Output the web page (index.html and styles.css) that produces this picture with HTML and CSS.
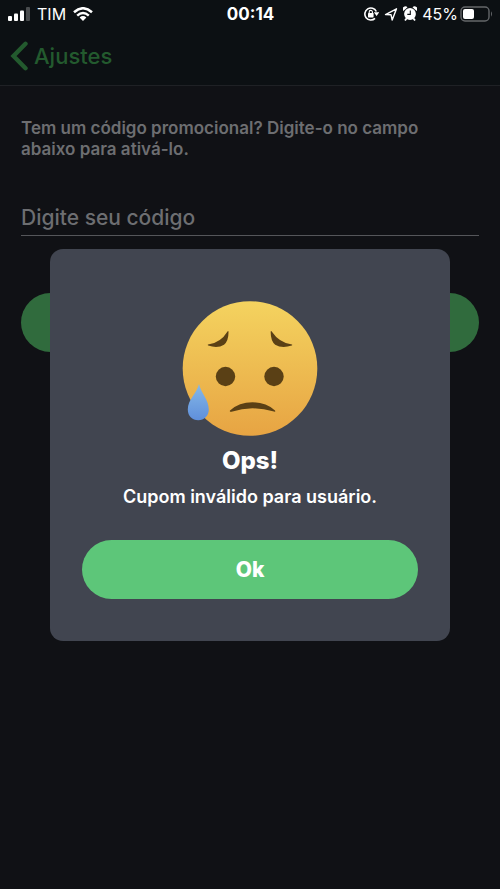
FILE: index.html
```html
<!DOCTYPE html>
<html lang="pt-BR">
<head>
<meta charset="utf-8">
<meta name="viewport" content="width=device-width, initial-scale=1">
<title>Código promocional</title>
<link rel="stylesheet" href="styles.css">
</head>
<body>
<header class="top">
  <div class="status">
    <div class="status-side">
      <svg width="22" height="14" viewBox="0 0 22 14" aria-hidden="true">
        <rect x="0" y="9" width="4" height="5" rx="1"/>
        <rect x="6" y="6.500" width="4" height="7.500" rx="1"/>
        <rect x="12" y="3.500" width="4" height="10.500" rx="1"/>
        <rect x="18" y="0" width="4" height="14" rx="1" opacity=".25"/>
      </svg>
      <span>TIM</span>
      <svg width="20" height="14" viewBox="0 0 20 14" aria-hidden="true">
        <g fill="none" stroke="currentColor" stroke-width="2.500">
          <path d="M1 5.200Q10-2.700 19 5.200"/>
          <path d="M4.200 8.600Q10 3.500 15.800 8.600"/>
        </g>
        <path d="M6.600 10.400Q10 7.700 13.400 10.400L10 14Z"/>
      </svg>
    </div>
    <time class="clock">00:14</time>
    <div class="status-side status-right">
      <svg width="15" height="16" viewBox="0 0 15 16" aria-hidden="true">
        <path d="M12.300 5.500A6 6 0 1 0 11 12.400" fill="none" stroke="currentColor" stroke-width="1.600"/>
        <path d="M9.800 6.300H15.200L12.600 10Z"/>
        <rect x="4" y="7" width="5.600" height="4.400" rx=".6"/>
        <path d="M5.200 7.300V6a1.600 1.600 0 0 1 3.200 0V7.300" fill="none" stroke="currentColor" stroke-width="1.100"/>
      </svg>
      <svg width="14" height="16" viewBox="0 0 14 16" aria-hidden="true">
        <path d="M1.500 8.600L12.500 2.800L8.200 14L7 8.700Z" fill="none" stroke="currentColor" stroke-width="1.400" stroke-linejoin="round"/>
      </svg>
      <svg width="14" height="16" viewBox="0 0 14 16" aria-hidden="true">
        <circle cx="7" cy="8" r="5.900"/>
        <path d="M.3 4.900A2.700 2.700 0 0 1 4.500 1.300ZM13.700 4.900A2.700 2.700 0 0 0 9.500 1.300Z"/>
        <path d="M3.500 12.500L2 14.500M10.500 12.500L12 14.500" stroke="currentColor" stroke-width="1.800"/>
        <path d="M7.300 4.500V8.400H4.300" fill="none" stroke="#0c1013" stroke-width="1.100"/>
      </svg>
      <span class="battery">45%
        <svg width="33" height="16" viewBox="0 0 33 16" aria-hidden="true">
          <rect x="1" y="1" width="28" height="14" rx="4" fill="none" stroke="#64676a" stroke-width="1.400"/>
          <rect x="3" y="3" width="11" height="10" rx="2"/>
          <path d="M31 5.300Q33 8 31 10.700Z" fill="#64676a"/>
        </svg>
      </span>
    </div>
  </div>
  <nav class="nav">
    <a class="back" href="#">
      <svg width="18" height="30" viewBox="0 0 18 30" aria-hidden="true">
        <path d="M15.500 2.800L3.500 15L15.500 27.200" fill="none" stroke="currentColor" stroke-width="4.400" stroke-linecap="round"/>
      </svg>
      Ajustes
    </a>
  </nav>
</header>

<main class="page">
  <form class="promo">
    <label class="hint" for="code">Tem um código promocional? Digite-o no campo abaixo para ativá-lo.</label>
    <input class="code" id="code" type="text" placeholder="Digite seu código">
    <button class="submit" type="button" aria-label="Ativar"></button>
  </form>
</main>

<div class="overlay">
  <section class="dialog" role="alertdialog" aria-labelledby="dialog-title" aria-describedby="dialog-text">
    <svg class="face" viewBox="0 0 136 135" aria-hidden="true">
      <defs>
        <linearGradient id="skin" x1="0" y1="0" x2="0" y2="1">
          <stop offset="0" stop-color="#f4d35f"/>
          <stop offset="1" stop-color="#e7a443"/>
        </linearGradient>
        <linearGradient id="tear" x1="0" y1="0" x2="0" y2="1">
          <stop offset="0" stop-color="#86b9e8"/>
          <stop offset="1" stop-color="#5f8fdb"/>
        </linearGradient>
      </defs>
      <circle cx="68" cy="67.500" r="67.300" fill="url(#skin)"/>
      <g fill="#5a4015">
        <path d="M26 43.500Q38.500 42 45.700 30.200Q46.600 29.500 46.500 31.500Q46.500 40 42 43.800Q35.500 47.900 26.200 44.600Q25.300 43.800 26 43.500Z"/>
        <path d="M110 43.500Q97.500 42 89.500 30.200Q88.600 29.500 88.700 31.500Q88.700 40 93.200 43.800Q100 47.900 109.800 44.600Q110.700 43.800 110 43.500Z"/>
        <circle cx="43.500" cy="75.500" r="9.700"/>
        <circle cx="92" cy="75.500" r="9.700"/>
        <path d="M48 109.500Q57 101.300 70.500 101.300Q84 101.300 93 109.500Q94 111 92 110.600Q81 107.300 70.500 107.300Q60 107.300 49.500 110.800Q47.300 111 48 109.500Z"/>
      </g>
      <path d="M17 83C19 92 26.800 98.500 26.800 108.500C26.800 115 22 119.300 16.300 119.300C10.200 119.300 5.800 115 5.800 108.500C5.800 98.500 15 92 17 83Z" fill="url(#tear)"/>
    </svg>
    <h1 class="title" id="dialog-title">Ops!</h1>
    <p class="message" id="dialog-text">Cupom inválido para usuário.</p>
    <button class="ok" type="button">Ok</button>
  </section>
</div>
</body>
</html>
```
FILE: styles.css
```css
* {
  box-sizing: border-box;
}

body {
  margin: 0;
  min-height: 100vh;
  background: #101115;
  color: #fff;
  font-family: Inter, "Liberation Sans", sans-serif;
}

svg {
  display: block;
  flex: none;
  fill: currentColor;
}

.top {
  background: #0c1013;
  border-bottom: 1px solid #1f2125;
}

.status {
  display: grid;
  grid-template-columns: 1fr auto 1fr;
  align-items: center;
  height: 28px;
  padding: 0 7px 0 8px;
  font-size: 16px;
  line-height: 20px;
}

.status-side {
  display: flex;
  align-items: center;
  gap: 7px;
}

.status-right {
  justify-content: flex-end;
  gap: 5px;
}

.clock {
  font-size: 17px;
  font-weight: 700;
}

.battery {
  display: flex;
  align-items: center;
  gap: 2px;
}

.nav {
  display: flex;
  align-items: center;
  height: 57px;
  padding: 0 10px 2px;
}

.back {
  display: flex;
  align-items: center;
  gap: 6px;
  color: #235a2e;
  font-size: 22px;
  font-weight: 500;
  line-height: 28px;
  text-decoration: none;
}

.page {
  padding: 32px 21px;
}

.promo {
  display: flex;
  flex-direction: column;
}

.hint {
  padding-right: 32px;
  color: #6d6e71;
  font-size: 17px;
  font-weight: 600;
  line-height: 21px;
}

.code {
  height: 40px;
  margin-top: 36px;
  padding: 4px 0 0;
  border: 0;
  border-bottom: 1px solid #55565a;
  border-radius: 0;
  outline: 0;
  background: none;
  color: #fff;
  font: 500 21px Inter, "Liberation Sans", sans-serif;
}

.code::placeholder {
  color: #6d6e71;
  opacity: 1;
}

.submit,
.ok {
  height: 59px;
  border: 0;
  border-radius: 30px;
}

.submit {
  margin-top: 57px;
  background: #306b3d;
}

.overlay {
  position: fixed;
  inset: 0;
  display: flex;
  align-items: center;
  justify-content: center;
}

.dialog {
  display: flex;
  flex-direction: column;
  align-items: center;
  width: 80%;
  padding: 52px 32px 42px;
  border-radius: 13px;
  background: #414550;
  text-align: center;
}

.face {
  width: 136px;
}

.title {
  margin: 9px 0 0;
  font-size: 24px;
  font-weight: 800;
  line-height: 32px;
}

.message {
  margin: 8px 0 31px;
  font-size: 18px;
  font-weight: 600;
  line-height: 24px;
}

.ok {
  width: 100%;
  background: #5dc679;
  color: #fff;
  font: 800 21px Inter, "Liberation Sans", sans-serif;
}
```
